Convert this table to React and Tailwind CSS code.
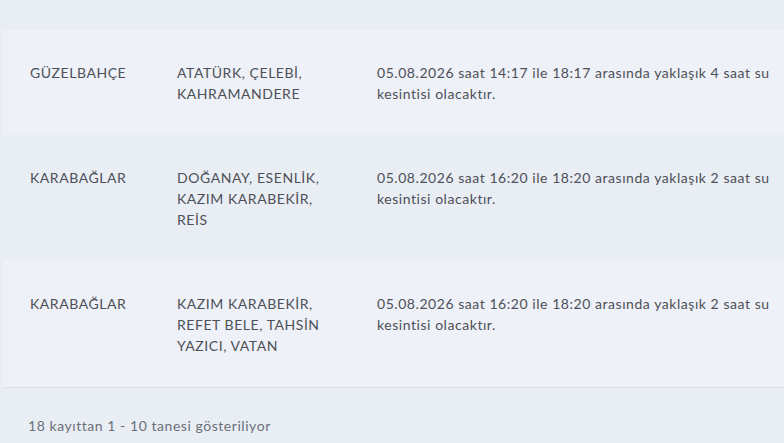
const rows = [
  {
    ilce: 'GÜZELBAHÇE',
    mahalle: 'ATATÜRK, ÇELEBİ, KAHRAMANDERE',
    aciklama: '05.08.2026 saat 14:17 ile 18:17 arasında yaklaşık 4 saat su kesintisi olacaktır.',
  },
  {
    ilce: 'KARABAĞLAR',
    mahalle: 'DOĞANAY, ESENLİK, KAZIM KARABEKİR, REİS',
    aciklama: '05.08.2026 saat 16:20 ile 18:20 arasında yaklaşık 2 saat su kesintisi olacaktır.',
  },
  {
    ilce: 'KARABAĞLAR',
    mahalle: 'KAZIM KARABEKİR, REFET BELE, TAHSİN YAZICI, VATAN',
    aciklama: '05.08.2026 saat 16:20 ile 18:20 arasında yaklaşık 2 saat su kesintisi olacaktır.',
  },
];

export default function App() {
  return (
    <div
      className="w-[784px] h-[443px] overflow-hidden bg-[#e9edf4] text-[14px] leading-[21px] tracking-[0.55px] text-[#4d5058]"
      style={{ fontFamily: 'Lato, "Open Sans", sans-serif' }}
    >
      <div className="pt-[30px] pl-[3px]">
        <div className="w-[840px] border-b border-[#dde2ea]">
          {rows.map((r, i) => (
            <div
              key={i}
              className={`flex py-[31.5px] pl-[27px] ${i % 2 === 0 ? 'bg-[#eef1f7]' : 'bg-[#e9edf4]'}`}
            >
              <div className="w-[147px] shrink-0 pr-3">{r.ilce}</div>
              <div className="w-[200px] shrink-0 pr-[42px]">{r.mahalle}</div>
              <div className="w-[408px] shrink-0">{r.aciklama}</div>
            </div>
          ))}
        </div>
        <div className="pl-[25px] pt-[27px] text-[#6b7079]">18 kayıttan 1 - 10 tanesi gösteriliyor</div>
      </div>
    </div>
  );
}
